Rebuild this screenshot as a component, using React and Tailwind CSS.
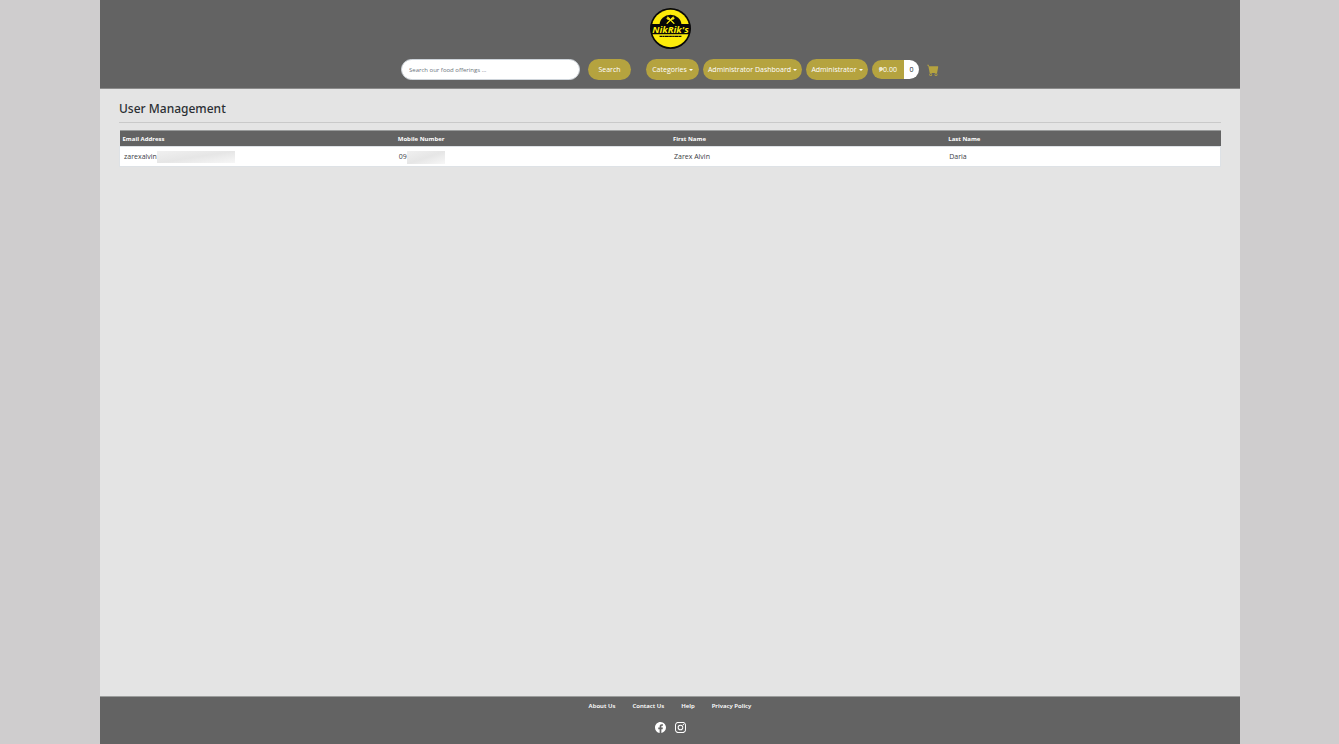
import { BsCartFill, BsFacebook, BsInstagram } from "react-icons/bs";

const pill =
  "flex h-[21px] items-center justify-center rounded-full bg-[#b5a33f] pt-[2px] text-[7px] text-white";

function Logo() {
  return (
    <svg viewBox="0 0 120 120" className="size-[41px]" role="img" aria-label="NikRik's">
      <circle cx="60" cy="60" r="60" fill="#080808" />
      <circle cx="60" cy="60" r="55" fill="#fdec0a" />
      <path d="M28 50a32 30 0 0 1 64 0z" fill="#080808" />
      <path d="M3 47H117Q119 60 116 77H4Q1 60 3 47Z" fill="#080808" />
      <g stroke="#fdec0a" strokeWidth="4" strokeLinecap="round" fill="none">
        <path d="M52 27L70 45M68 27L50 45" />
        <path d="M50 30q3 5 6 1M70 30q-4 4-6 1" />
      </g>
      <text
        x="60"
        y="74"
        textAnchor="middle"
        fill="#fdec0a"
        fontSize="28"
        fontStyle="italic"
        fontWeight="700"
        fontFamily="'Open Sans', sans-serif"
      >
        NikRik's
      </text>
      <path d="M28 83H92" stroke="#080808" strokeWidth="4" strokeDasharray="8 1 5 1 12 1" />
    </svg>
  );
}

function Menu({ label, className }) {
  return (
    <button type="button" aria-haspopup="menu" className={`${pill} gap-[2px] ${className}`}>
      {label}
      <svg viewBox="0 0 4 2" className="mb-[2px] h-[2px] w-[4px]" aria-hidden="true">
        <path d="M0 0H4L2 2Z" fill="currentColor" />
      </svg>
    </button>
  );
}

function Header() {
  return (
    <header className="border-b border-[#8b8b8b] bg-[#636363] pt-2 pb-2">
      <a href="#home" className="mx-auto block w-fit">
        <Logo />
      </a>
      <nav className="mt-[10px] flex items-center justify-center">
        <form className="flex items-center gap-2" onSubmit={(e) => e.preventDefault()}>
          <input
            type="search"
            aria-label="Search our food offerings"
            placeholder="Search our food offerings ..."
            className="h-[21px] w-[179px] rounded-full border border-[#ced4da] bg-white px-[7px] text-[6px] text-[#212529] outline-none placeholder:text-[#6c757d]"
          />
          <button type="submit" className={`${pill} w-[43px]`}>
            Search
          </button>
        </form>
        <div className="ml-[15px] flex items-center gap-1">
          <Menu label="Categories" className="w-[53px]" />
          <Menu label="Administrator Dashboard" className="w-[99px]" />
          <Menu label="Administrator" className="w-[62px]" />
          <div className="flex h-[19px] overflow-hidden rounded-full text-[7px]">
            <span className="flex w-8 items-center justify-center bg-[#b5a33f] pt-[2px] text-white">₱0.00</span>
            <span className="flex w-[15px] items-center justify-center bg-white pt-[2px] text-[#212529]">0</span>
          </div>
        </div>
        <a href="#cart" aria-label="Cart" className="ml-2 text-[#b5a33f]">
          <BsCartFill className="size-3" />
        </a>
      </nav>
    </header>
  );
}

function Masked({ text, className }) {
  return (
    <div className="flex items-center">
      {text}
      <span
        className={`bg-linear-to-br from-[#f0f0f0] via-[#e6e6e6] to-[#f7f7f7] ${className}`}
      />
    </div>
  );
}

const columns = ["Email Address", "Mobile Number", "First Name", "Last Name"];
const users = [
  [
    <Masked text="zarexalvin" className="h-3 w-[78px]" />,
    <Masked text="09" className="h-[13px] w-[38px]" />,
    "Zarex Alvin",
    "Daria",
  ],
];

function UserTable() {
  return (
    <table className="mt-[7px] w-full table-fixed border-collapse text-left">
      <thead>
        <tr className="h-4 border-t border-[#999b9b] bg-[#636363]">
          {columns.map((c) => (
            <th
              key={c}
              scope="col"
              className="px-[3px] pt-[2px] pb-0 text-[6px] leading-[13px] font-bold text-white"
            >
              {c}
            </th>
          ))}
        </tr>
      </thead>
      <tbody>
        {users.map((row, i) => (
          <tr key={i} className="h-5 border border-[#dee2e6] bg-white">
            {row.map((cell, j) => (
              <td key={j} className="px-1 pt-px pb-0 text-[7px] leading-[18px] text-[#3b4045]">
                {cell}
              </td>
            ))}
          </tr>
        ))}
      </tbody>
    </table>
  );
}

function Footer() {
  return (
    <footer className="border-t border-[#9b9d9c] bg-[#636363] pb-[11px] text-white">
      <nav className="flex justify-center gap-[17px] pt-1 font-['Noto_Sans',sans-serif] text-[6px] leading-[10px] font-semibold">
        <a href="#about">About Us</a>
        <a href="#contact">Contact Us</a>
        <a href="#help">Help</a>
        <a href="#privacy">Privacy Policy</a>
      </nav>
      <div className="mt-[11px] flex justify-center gap-[9px]">
        <a href="#facebook" aria-label="Facebook">
          <BsFacebook className="size-[11px]" />
        </a>
        <a href="#instagram" aria-label="Instagram">
          <BsInstagram className="size-[11px]" />
        </a>
      </div>
    </footer>
  );
}

export default function App() {
  return (
    <div className="min-h-screen bg-[#cfcdce] pl-px font-['Open_Sans','Noto_Sans',sans-serif]">
      <div className="mx-auto flex min-h-screen max-w-[1140px] flex-col bg-[#e4e4e4]">
        <Header />
        <main className="grow px-[19px] pt-[11px]">
          <h1 className="border-b border-[#c9c9c9] pb-1 font-['Noto_Sans',sans-serif] text-[12px] leading-[18px] font-medium text-[#2b2f33]">
            User Management
          </h1>
          <UserTable />
        </main>
        <Footer />
      </div>
    </div>
  );
}
